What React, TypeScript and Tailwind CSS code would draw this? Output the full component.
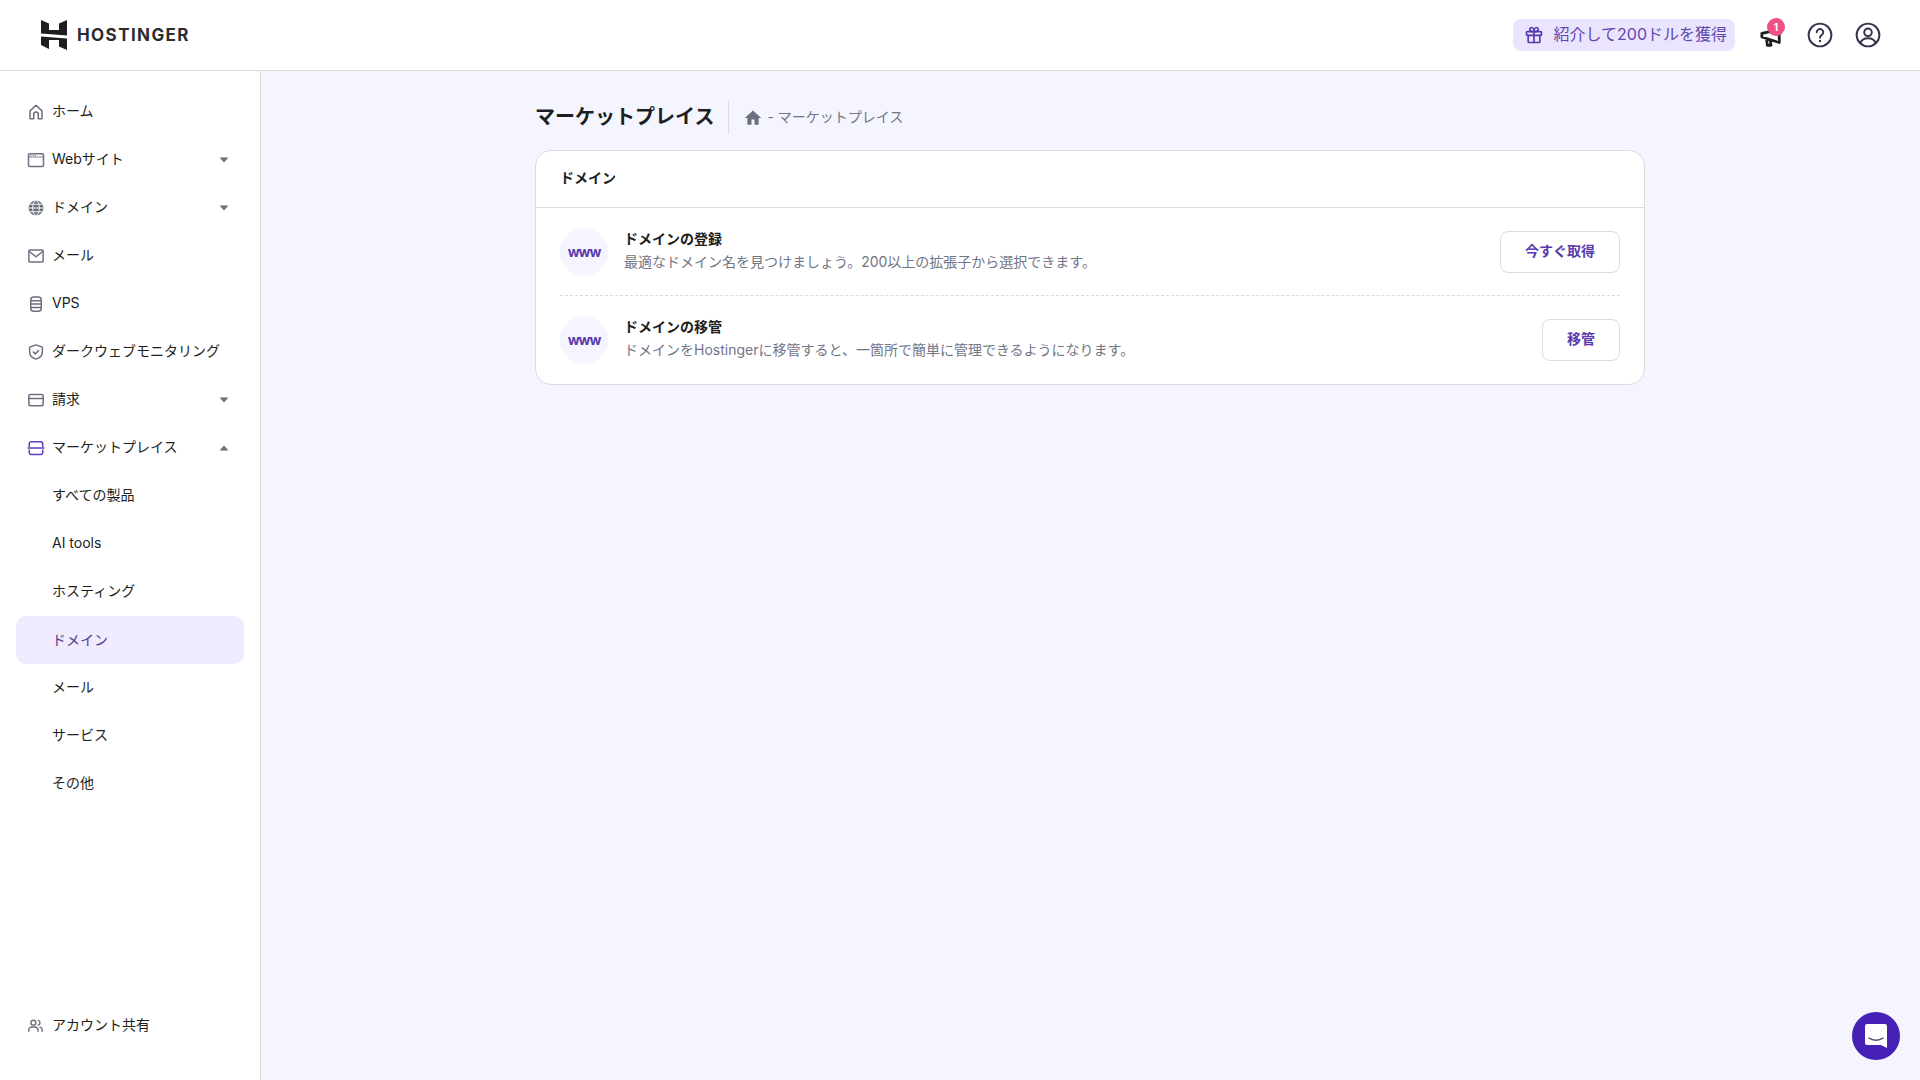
import React from "react";

const font = { fontFamily: '"Inter","Noto Sans CJK JP",sans-serif' };

function Ic({ children, className = "text-[#6d7081]", size = 18 }: { children: React.ReactNode; className?: string; size?: number }) {
  return (
    <svg width={size} height={size} viewBox="0 0 24 24" fill="none" stroke="currentColor" strokeWidth="2" strokeLinecap="round" strokeLinejoin="round" className={`shrink-0 ${className}`}>
      {children}
    </svg>
  );
}

const HomeI = () => <Ic><path d="M4 21V10.5L12 3l8 7.5V21h-5v-6a3 3 0 0 0-6 0v6z" /></Ic>;
const WebI = () => <Ic><rect x="2" y="3.5" width="20" height="17" rx="1.5" /><path d="M2 8h20" strokeWidth="1.2" /><path d="M5 6h.5M8 6h.5M11 6h.5" strokeWidth="1.2" /></Ic>;
const GlobeI = () => <Ic><circle cx="12" cy="12" r="10" fill="currentColor" stroke="none" /><g stroke="#fff" strokeWidth="1.2"><ellipse cx="12" cy="12" rx="4.5" ry="10" /><path d="M2 12h20M3.5 7h17M3.5 17h17" /></g></Ic>;
const MailI = () => <Ic><rect x="2.5" y="4" width="19" height="16" rx="1.5" /><path d="M3 6l9 7 9-7" /></Ic>;
const DbI = () => <Ic><rect x="5" y="2.5" width="14" height="19" rx="4" /><path d="M5 7.5h14M5 12h14M5 16.5h14" /></Ic>;
const ShieldI = () => <Ic><path d="M12 2.5l8.5 3v6.5c0 5-3.6 8-8.5 9.5-4.9-1.5-8.5-4.5-8.5-9.5V5.5z" /><path d="M8.5 12l2.5 2.5 4.5-4.5" /></Ic>;
const CardI = () => <Ic><rect x="2.5" y="4.5" width="19" height="15" rx="2" /><path d="M2.5 10h19" /></Ic>;
const StoreI = () => <Ic className="text-[#5f3fc0]"><path d="M3 10V6.500A3 3 0 0 1 6 3.500h12a3 3 0 0 1 3 3V10" /><path d="M3 14.500v3a3 3 0 0 0 3 3h12a3 3 0 0 0 3-3v-3" /><path d="M1.500 12h21" /></Ic>;
const UsersI = () => <Ic size={17}><circle cx="9" cy="8" r="3.5" /><path d="M2.5 20v-1.5A4.5 4.5 0 0 1 7 14h4a4.5 4.5 0 0 1 4.5 4.5V20" /><path d="M16 4.7a3.5 3.5 0 0 1 0 6.6M18.5 14.3a4.5 4.5 0 0 1 3 4.2V20" /></Ic>;

const Caret = ({ up }: { up?: boolean }) => (
  <svg width="10" height="6" viewBox="0 0 10 6" className="shrink-0 text-[#6d7081]" fill="currentColor">
    <path d={up ? "M5 .5L9.5 5.5H.5z" : "M.5 .5h9L5 5.5z"} />
  </svg>
);

function Item({ icon, label, caret, up }: { icon?: React.ReactNode; label: string; caret?: boolean; up?: boolean }) {
  return (
    <div className="flex h-[48px] items-center pl-[11px] pr-[15px] rounded-lg text-[14px]">
      <span className="w-[25px] flex shrink-0 pt-[1px]">{icon}</span>
      <span className="text-[#1d1e20] pb-[2px]">{label}</span>
      {caret && <span className="ml-auto flex pt-[1px]"><Caret up={up} /></span>}
    </div>
  );
}

function Sub({ label, active }: { label: string; active?: boolean }) {
  return (
    <div className={`flex h-[48px] items-center pl-[36px] pb-[2px] rounded-[10px] text-[14px] ${active ? "bg-[#f0ebff] text-[#4f3c8c]" : "text-[#1d1e20]"}`}>
      {label}
    </div>
  );
}

function Row({ title, desc, btn }: { title: string; desc: string; btn: string }) {
  return (
    <div className="flex items-center h-[87px]">
      <div className="w-[48px] h-[48px] rounded-full bg-[#f4f5ff] flex items-center justify-center text-[14px] tracking-[-1px] font-bold text-[#5a3aac] shrink-0">www</div>
      <div className="ml-[16px] flex-1 pb-[3px]">
        <div className="text-[14px] leading-[23px] font-bold text-[#1d1e20]">{title}</div>
        <div className="text-[14px] leading-[23px] text-[#727586]">{desc}</div>
      </div>
      <button className="h-[42px] px-[24px] pb-[2px] rounded-lg border border-[#dadce0] bg-white text-[14px] font-bold text-[#5a3aac]">{btn}</button>
    </div>
  );
}

export default function App() {
  return (
    <div style={font} className="w-[1920px] h-[1080px] flex flex-col bg-[#f4f5ff] overflow-hidden relative">
      <header className="h-[71px] shrink-0 bg-white border-b border-[#dadce0] flex items-center pl-[41px] pr-[39px]">
        <svg width="26" height="30" viewBox="0 0 26 30" className="text-[#1d1e20]" fill="currentColor">
          <path d="M0 0l8 3.500V10h10V3.500L26 0V15.500L0 13.500zM0 16.500L26 18.500V30L18 26.500V20H8V29L0 25z" />
        </svg>
        <span className="ml-[10px] mt-[2px] text-[17px] font-bold tracking-[1.4px] text-[#2b2c30]">HOSTINGER</span>
        <div className="ml-auto flex items-center">
          <div className="h-[32px] flex items-center rounded-lg bg-[#ebe4ff] pl-[11px] pr-[8px] text-[16px] text-[#5f49ad]">
            <Ic className="text-[#5a3aac]" size={20}>
              <rect x="3" y="8" width="18" height="4.500" rx="1" />
              <path d="M5 12.500V20a1 1 0 0 0 1 1h12a1 1 0 0 0 1-1v-7.500M12 8v13" />
              <path d="M12 8C9 8 7 6.500 7 5a2 2 0 0 1 2-2c2 0 3 3 3 5zM12 8c3 0 5-1.500 5-3a2 2 0 0 0-2-2c-2 0-3 3-3 5z" />
            </Ic>
            <span className="ml-[10px] -mt-[2px]">紹介して200ドルを獲得</span>
          </div>
          <div className="relative ml-[24px] w-[24px] h-[24px]">
            <svg width="22" height="22" viewBox="0 0 24 24" fill="none" stroke="#1d1e20" strokeWidth="3" strokeLinejoin="round" className="absolute left-[1px] top-[3px]">
              <path d="M2 8l19-4v14L2 12zM7 13l1 8h4l-1-7" />
            </svg>
            <span className="absolute left-[8px] -top-[5px] w-[18px] h-[18px] rounded-full bg-[#f0508a] text-white text-[10px] font-bold flex items-center justify-center">1</span>
          </div>
          <span className="ml-[24px] flex">
            <svg width="26" height="26" viewBox="0 0 24 24" fill="none" stroke="#36344d" strokeWidth="1.800" strokeLinecap="round">
              <circle cx="12" cy="12" r="10.500" />
              <path d="M9 9.500a3 3 0 1 1 4.500 2.600c-1 .6-1.500 1.200-1.500 2.400" />
              <path d="M12 17.500v.1" strokeWidth="2.200" />
            </svg>
          </span>
          <span className="ml-[22px] flex">
            <svg width="26" height="26" viewBox="0 0 24 24" fill="none" stroke="#36344d" strokeWidth="1.800" strokeLinecap="round">
              <circle cx="12" cy="12" r="10.500" />
              <circle cx="12" cy="9.500" r="3.500" />
              <path d="M5 19.500c1-3 3.500-4.500 7-4.500s6 1.500 7 4.500" />
            </svg>
          </span>
        </div>
      </header>

      <div className="flex flex-1 min-h-0">
        <aside className="w-[261px] shrink-0 bg-white border-r border-[#dadce0] px-[16px] pt-[16px] flex flex-col">
          <Item icon={<HomeI />} label="ホーム" />
          <Item icon={<WebI />} label="Webサイト" caret />
          <Item icon={<GlobeI />} label="ドメイン" caret />
          <Item icon={<MailI />} label="メール" />
          <Item icon={<DbI />} label="VPS" />
          <Item icon={<ShieldI />} label="ダークウェブモニタリング" />
          <Item icon={<CardI />} label="請求" caret />
          <Item icon={<StoreI />} label="マーケットプレイス" caret up />
          <Sub label="すべての製品" />
          <Sub label="AI tools" />
          <Sub label="ホスティング" />
          <div className="mt-[1px] -mb-[1px]">
            <Sub label="ドメイン" active />
          </div>
          <Sub label="メール" />
          <Sub label="サービス" />
          <Sub label="その他" />
          <div className="mt-auto mb-[31px]">
            <Item icon={<UsersI />} label="アカウント共有" />
          </div>
        </aside>

        <main className="flex-1 min-w-0 pl-[274px] pt-[30px]">
          <div className="w-[1110px]">
            <div className="flex items-center h-[33px]">
              <h1 className="text-[20px] font-bold text-[#1d1e20] leading-[33px]">マーケットプレイス</h1>
              <div className="w-px h-[33px] bg-[#dadce0] ml-[14px]" />
              <svg width="18" height="18" viewBox="0 0 24 24" fill="#6d7081" className="ml-[15px]">
                <path d="M10 21v-7h4v7h5.500v-9H23L12 2 1 12h3.500v9z" />
              </svg>
              <span className="ml-[5px] pb-[2px] text-[14px] text-[#727586]">- マーケットプレイス</span>
            </div>
            <section className="mt-[16px] bg-white border border-[#dadce0] rounded-2xl pb-[1px]">
              <div className="h-[57px] flex items-center px-[24px] border-b border-[#dadce0] text-[14px] font-bold text-[#1d1e20] pb-[3px]">ドメイン</div>
              <div className="px-[24px]">
                <Row title="ドメインの登録" desc="最適なドメイン名を見つけましょう。200以上の拡張子から選択できます。" btn="今すぐ取得" />
                <div className="border-t border-dashed border-[#dadce0]" />
                <Row title="ドメインの移管" desc="ドメインをHostingerに移管すると、一箇所で簡単に管理できるようになります。" btn="移管" />
              </div>
            </section>
          </div>
        </main>
      </div>

      <div className="absolute left-[1852px] top-[1012px] w-[48px] h-[48px] rounded-full bg-[#4521b5] flex items-center justify-center">
        <svg width="24" height="26" viewBox="0 0 24 26">
          <path d="M3 1h18a2 2 0 0 1 2 2v22l-6-3H3a2 2 0 0 1-2-2V3a2 2 0 0 1 2-2z" fill="#fff" />
          <path d="M5 15c4 3 10 3 14 0" fill="none" stroke="#4a4a68" strokeWidth="1.500" strokeLinecap="round" />
        </svg>
      </div>
    </div>
  );
}
